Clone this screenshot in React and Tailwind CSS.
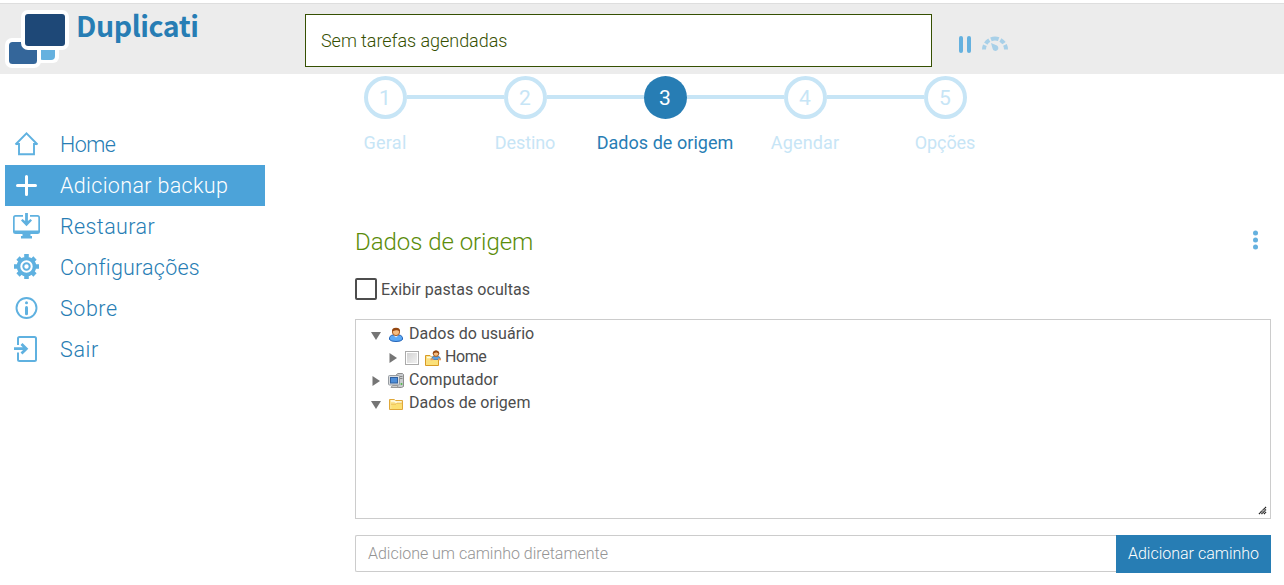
import React from 'react';

const HomeIcon = () => (
  <svg width="28" height="28" viewBox="0 0 28 28" fill="none" stroke="#5fb1e0" strokeWidth="1.9">
    <path d="M3 14H6.500V24.300H21.500V14H25M3 14.500L14 3.300L25 14.500" transform="translate(-.5 0)" />
  </svg>
);

const PlusIcon = () => (
  <svg width="28" height="28" viewBox="0 0 28 28" stroke="#fff" strokeWidth="3" strokeLinecap="round">
    <path d="M13.500 5.500V23.500M4.500 14.500H22.500" />
  </svg>
);

const RestoreIcon = () => (
  <svg width="28" height="28" viewBox="0 0 28 28" fill="#5fb1e0">
    <path d="M10 3H2.500Q0 3 0 5.500V20Q0 22 2.500 22H9.500V24H8V26.500H19V24H17.500V22H24.500Q27 22 27 20V5.500Q27 3 24.500 3H17V4.800H24.500Q25.300 4.800 25.300 5.500V18.500H1.700V5.500Q1.700 4.800 2.500 4.800H10Z" />
    <path d="M12.100 1H14.900V9L17.500 7L19 8.600L13.500 14.300L8 8.600L9.500 7L12.100 9Z" />
  </svg>
);

const GearIcon = () => (
  <svg width="28" height="28" viewBox="0 0 28 28" fill="none" stroke="#5fb1e0">
    <circle cx="13.500" cy="13.500" r="8" strokeWidth="3.600" />
    <circle cx="13.500" cy="13.500" r="3.200" strokeWidth="2" />
    <path d="M13.500 1V4.500M13.500 22.500V26M1 13.500H4.500M22.500 13.500H26M5 5L7.500 7.500M19.500 19.500L22 22M5 22L7.500 19.500M19.500 7.500L22 5" strokeWidth="4.600" />
  </svg>
);

const InfoIcon = () => (
  <svg width="28" height="28" viewBox="0 0 28 28" fill="none" stroke="#5fb1e0">
    <circle cx="13.500" cy="14" r="10" strokeWidth="1.900" />
    <path d="M13.500 13.500V19.700" strokeWidth="3" strokeLinecap="round" />
    <circle cx="13.500" cy="8.700" r="1.500" fill="#5fb1e0" stroke="none" />
  </svg>
);

const LogoutIcon = () => (
  <svg width="28" height="28" viewBox="0 0 28 28" fill="none" stroke="#5fb1e0">
    <path d="M5 10V3.500Q5 2 6.500 2H21.500Q23 2 23 3.500V24.500Q23 26 21.500 26H6.500Q5 26 5 24.500V17.500" strokeWidth="2" />
    <path d="M1 13.700H13M8.500 9L13.300 13.700L8.500 18.400" strokeWidth="2.800" />
  </svg>
);

const nav = [
  { label: 'Home', icon: HomeIcon, track: 'tracking-[-0.5px]' },
  { label: 'Adicionar backup', icon: PlusIcon, active: true, track: 'tracking-[0.34px]' },
  { label: 'Restaurar', icon: RestoreIcon, track: 'tracking-[0.4px]' },
  { label: 'Configurações', icon: GearIcon, track: 'tracking-[0.22px]' },
  { label: 'Sobre', icon: InfoIcon, track: 'tracking-[0.55px]' },
  { label: 'Sair', icon: LogoutIcon, track: 'tracking-[0.65px]' },
];

const Logo = () => (
  <svg className="shrink-0" width="66" height="60" viewBox="0 0 66 60">
    <rect x="30" y="32" width="24" height="21" rx="6" fill="#fff" />
    <rect x="34" y="34" width="16" height="16" rx="4" fill="#65b1df" />
    <rect x="0" y="28" width="36" height="30" rx="7" fill="#fff" />
    <rect x="4" y="32" width="28" height="22" rx="3.500" fill="#34669a" />
    <rect x="16" y="0" width="48" height="40" rx="7" fill="#fff" />
    <rect x="20" y="4" width="40" height="32" rx="3" fill="#1e4877" />
  </svg>
);

const Header = () => (
  <header className="mt-[3px] flex h-[71px] border-t border-[#dedede] bg-[#ececec]">
    <div className="flex w-[305px] pl-[5px] pt-[6px]">
      <Logo />
      <h1 className="ml-[5px] mt-[-5px] font-['Noto_Sans_CJK_SC','Noto_Sans',sans-serif] text-[28.5px] font-bold leading-[40px] tracking-[-0.4px] text-[#277db4]">Duplicati</h1>
    </div>
    <div className="mt-[10px] flex h-[53px] w-[627px] items-center border border-[#365002] bg-white pl-[15px] text-[18px] font-[350] tracking-[-0.05px] text-[#365002]">
      Sem tarefas agendadas
    </div>
    <svg className="ml-[24px] mt-[26px]" width="56" height="30" viewBox="0 0 56 30">
      <rect x="3" y="6" width="4" height="17" rx="2" fill="#65b1df" />
      <rect x="11" y="6" width="4" height="17" rx="2" fill="#65b1df" />
      <path d="M28 19.500A11 11 0 0 1 50 19.500" fill="none" stroke="#a8d0e8" strokeWidth="4" strokeDasharray="4.500 1.900 5 1.900 8 1.900 5 1.900 5" pathLength="35" />
      <path d="M35 13L41 15.600A2.900 2.900 0 1 1 36.700 19Z" fill="#a8d0e8" />
    </svg>
  </header>
);

const steps = [
  { n: 1, label: 'Geral', track: 'tracking-[0.3px]' },
  { n: 2, label: 'Destino', track: 'tracking-[-0.1px]' },
  { n: 3, label: 'Dados de origem', active: true, track: 'tracking-[0.04px]' },
  { n: 4, label: 'Agendar', track: 'tracking-[0.15px]' },
  { n: 5, label: 'Opções', track: 'tracking-[-0.1px]' },
];

const Steps = () => (
  <ol className="ml-[10px] mt-[2px] flex">
    {steps.map((s, i) => (
      <li key={s.n} className="flex w-[140px] flex-col items-center">
        <div className="flex w-full items-center">
          <span className={i === 0 ? 'mb-[2px] h-1 flex-1' : 'mb-[2px] h-1 flex-1 bg-[#c7e5f6]'} />
          <span
            className={
              s.active
                ? 'flex h-[43px] w-[43px] items-center justify-center rounded-full bg-[#277db4] pt-[2px] text-[21px] text-white'
                : 'flex h-[43px] w-[43px] items-center justify-center rounded-full border-4 border-[#c7e5f6] pt-[2px] text-[21px] text-[#c7e5f6]'
            }
          >
            {s.n}
          </span>
          <span className={i === 4 ? 'mb-[2px] h-1 flex-1' : 'mb-[2px] h-1 flex-1 bg-[#c7e5f6]'} />
        </div>
        <span className={(s.active ? 'mt-[12px] whitespace-nowrap text-[18px] leading-6 text-[#277db4] ' : 'mt-[12px] text-[18px] leading-6 text-[#c7e5f6] ') + s.track}>
          {s.label}
        </span>
      </li>
    ))}
  </ol>
);

const Expander = ({ open }) => (
  <svg className="shrink-0" width="10" height="12" viewBox="0 0 10 12" fill="#757575">
    {open ? <path d="M0 3H10L5 11Z" /> : <path d="M1.500 1V11L9 6Z" />}
  </svg>
);

const UserIcon = () => (
  <svg width="16" height="16" viewBox="0 0 16 16">
    <path d="M1.500 12.500Q1 8.500 5 8H11Q15 8.500 14.500 12.500Q13 14.500 8 14.500T1.500 12.500Z" fill="#5aa9f6" stroke="#2462b5" />
    <path d="M5.500 8.500L8 10.500L10.500 8.500Z" fill="#d8ebff" />
    <circle cx="8" cy="5" r="3.600" fill="#f6bd80" stroke="#a75b20" />
    <path d="M4 4.600Q3.600 .8 8 .8T12 4.600Q10 2.800 8 3.200T4 4.600Z" fill="#944710" />
  </svg>
);

const FolderIcon = () => (
  <svg width="16" height="16" viewBox="0 0 16 16">
    <path d="M1.500 13.500V3.500H6L7.500 4.500H14.500V13.500Z" fill="#fbe391" stroke="#e0a83a" />
    <path d="M3 5H6.500L7.500 6H13.500" fill="none" stroke="#fffbe8" strokeWidth="1.300" />
    <path d="M3.500 13V8.500H8L9.500 7.500H14V13Z" fill="#fbdf72" />
    <path d="M3 8.200H8L9 7.200H14" fill="none" stroke="#e8b64a" strokeWidth=".8" />
  </svg>
);

const HomeFolderIcon = () => (
  <svg width="16" height="16" viewBox="0 0 16 16">
    <path d="M.5 15.500V5.500H5L6.500 7H13.500V15.500Z" fill="#fbe083" stroke="#d89b25" />
    <path d="M2 7.500H6L7 8.500H12" stroke="#fffbe0" strokeWidth="1.500" fill="none" />
    <path d="M6.500 9.500Q6.500 6.800 9 6.300H13Q15.500 6.800 15.500 9.500Z" fill="#5a9fe0" stroke="#3b74ae" strokeWidth=".8" />
    <path d="M5.500 9.300H8.500M13 9.300H16" stroke="#e79a5a" strokeWidth="1.800" />
    <circle cx="11" cy="3.700" r="2.700" fill="#f6bd80" stroke="#a75b20" />
    <path d="M7.800 4Q7.500 .4 11 .4T14.200 4Q12.500 2.200 11 2.500T7.800 4Z" fill="#944710" />
    <path d="M2 15V11H7L8 10.300H13V15Z" fill="#fbe17a" />
  </svg>
);

const ComputerIcon = () => (
  <svg width="16" height="16" viewBox="0 0 16 16">
    <path d="M8.500 1.500L10 .5H14.500L15.500 1.500V13.500L13.500 14.500H9.500Z" fill="#c8cbce" stroke="#8d8d8d" />
    <path d="M10.500 3.500H14.500M10.500 5.500H14.500" stroke="#888" />
    <rect x=".5" y="2.500" width="11" height="9.500" rx="1" fill="#d9dcdf" stroke="#989da2" />
    <rect x="2.500" y="4.500" width="7" height="5.500" fill="#4c8dd9" stroke="#2f5f9f" />
    <path d="M3 14.500L4.500 12.500H9L10.500 14.500Z" fill="#ccc" stroke="#999" />
    <circle cx="13.500" cy="11" r="1" fill="#50b947" />
  </svg>
);

const Tree = () => (
  <div className="mt-[19px] flex h-[200px] flex-col border border-[#ccc] pt-[3px] text-[16px] leading-[23px] tracking-[0.03px] text-[#4d4d4d]">
    <div className="flex h-[23px] items-center pl-[15px]">
      <Expander open />
      <span className="ml-[7px] mr-[5px]"><UserIcon /></span>
      <span className="mt-[-3px]">Dados do usuário</span>
    </div>
    <div className="flex h-[23px] items-center pl-[32px]">
      <Expander />
      <span className="ml-[7px] h-[14px] w-[14px] border border-[#aaa] bg-gradient-to-br from-[#d0d0d0] to-[#f3f3f3] shadow-[inset_0_0_0_1px_#fff]" />
      <span className="ml-[6px] mr-[4px]"><HomeFolderIcon /></span>
      <span className="mt-[-3px] tracking-[-0.4px]">Home</span>
    </div>
    <div className="flex h-[23px] items-center pl-[15px]">
      <Expander />
      <span className="ml-[7px] mr-[5px]"><ComputerIcon /></span>
      <span className="mt-[-3px]">Computador</span>
    </div>
    <div className="flex h-[23px] items-center pl-[15px]">
      <Expander open />
      <span className="ml-[7px] mr-[5px]"><FolderIcon /></span>
      <span className="mt-[-3px]">Dados de origem</span>
    </div>
    <svg className="mb-[3px] mr-[3px] mt-auto self-end" width="9" height="9" viewBox="0 0 9 9" stroke="#222" strokeWidth="1.300" strokeDasharray="1.400 .3">
      <path d="M1 8L8 1M3.500 8L8 3.500M6 8L8 6" />
    </svg>
  </div>
);

export default function App() {
  return (
    <div className="h-[585px] w-[1284px] overflow-hidden bg-white font-['Roboto','Liberation_Sans',sans-serif]">
      <Header />
      <div className="flex">
        <nav className="ml-[5px] mt-[50px] w-[260px] shrink-0">
          {nav.map(({ label, icon: Icon, active, track }) => (
            <a
              key={label}
              className={
                active
                  ? 'flex h-[41px] items-center bg-[#4ca3d9] pl-[8px] text-[21.5px] font-[350] text-white'
                  : 'flex h-[41px] items-center pl-[8px] text-[21.5px] font-[350] text-[#277db4]'
              }
            >
              <span className="mb-[2px]"><Icon /></span>
              <span className={'ml-[19px] mt-[1px] whitespace-nowrap ' + track}>{label}</span>
            </a>
          ))}
        </nav>
        <main className="ml-[40px] w-[966px]">
          <Steps />
          <section className="ml-[50px] mt-[69px]">
            <div className="flex h-[36px] items-center justify-between">
              <h2 className="text-[24px] font-[350] leading-[36px] tracking-[-0.04px] text-[#5b8c0a]">Dados de origem</h2>
              <svg className="mb-[4px] mr-[12px]" width="7" height="20" viewBox="0 0 7 20" fill="#65b1df">
                <circle cx="3.500" cy="3" r="2.500" />
                <circle cx="3.500" cy="10" r="2.500" />
                <circle cx="3.500" cy="17" r="2.500" />
              </svg>
            </div>
            <label className="mt-[17px] flex h-[23px] items-center text-[16px] tracking-[0.07px] text-[#4d4d4d]">
              <span className="mr-[4px] h-[22px] w-[22px] rounded-[2px] border-2 border-[#4d4d4d]" />
              <span className="mt-[2px]">Exibir pastas ocultas</span>
            </label>
            <Tree />
            <div className="mt-[16px] flex">
              <div className="flex h-[37px] w-[761px] items-center rounded-l-[2px] border border-r-0 border-[#ccc] pl-[12px] text-[16px] font-[350] tracking-[-0.02px] text-[#949494]">
                Adicione um caminho diretamente
              </div>
              <button className="h-[38px] w-[155px] whitespace-nowrap bg-[#277db4] text-[16px] font-[350] tracking-[0px] text-white">Adicionar caminho</button>
            </div>
          </section>
        </main>
      </div>
    </div>
  );
}
